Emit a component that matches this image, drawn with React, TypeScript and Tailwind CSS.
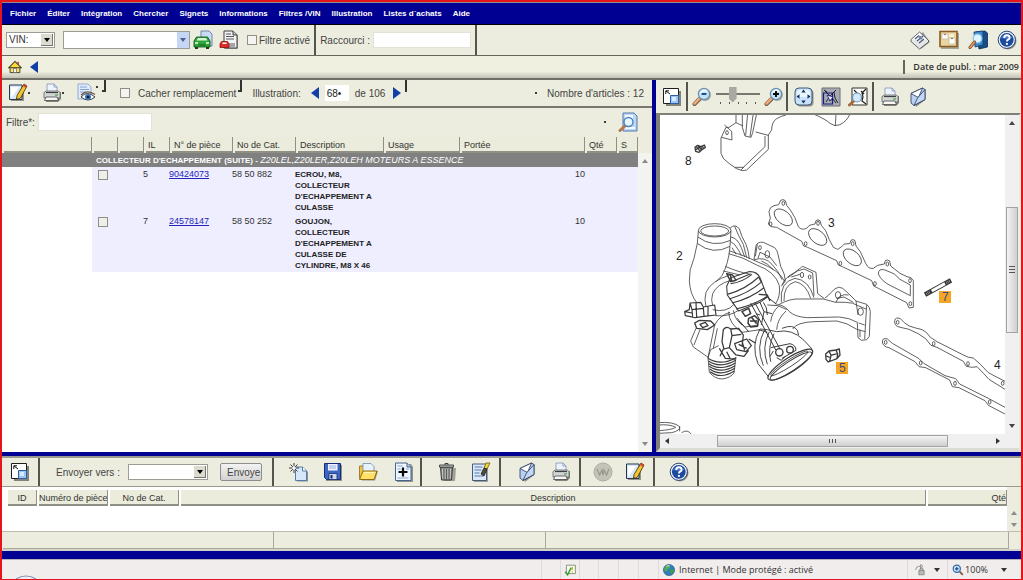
import React from "react";
import clsx from "clsx";

type IconProps = { className?: string };

const MENU = [
  "Fichier",
  "Éditer",
  "Intégration",
  "Chercher",
  "Signets",
  "Informations",
  "Filtres /VIN",
  "Illustration",
  "Listes d´achats",
  "Aide",
];

const PARTS = [
  {
    il: "5",
    partNo: "90424073",
    catNo: "58 50 882",
    description: ["ECROU, M8,", "COLLECTEUR", "D'ECHAPPEMENT A", "CULASSE"],
    qty: 10,
  },
  {
    il: "7",
    partNo: "24578147",
    catNo: "58 50 252",
    description: ["GOUJON,", "COLLECTEUR", "D'ECHAPPEMENT A", "CULASSE DE", "CYLINDRE, M8 X 46"],
    qty: 10,
  },
];

/* ---------- Icons ---------- */

function Svg({ children, className = "size-5" }: { children: React.ReactNode; className?: string }) {
  return (
    <svg viewBox="0 0 20 20" className={clsx("block shrink-0", className)} fill="none" aria-hidden="true">
      {children}
    </svg>
  );
}

function NoteIcon() {
  return (
    <Svg>
      <path d="M3 3h13v15H3z" fill="#5a5a55" opacity=".6" />
      <path d="M1.500 2h12.500v14.500H1.500z" fill="#d8e8fa" stroke="#26364f" />
      <path d="M3 4h8l-7 10H3z" fill="#fff" />
      <path d="M16 1l3 2-6.500 12-4 2 .500-4.500z" fill="#f3c62e" stroke="#4a3a10" strokeWidth=".9" />
      <path d="M16 1l3 2-1 2-3.200-1.900z" fill="#d8452f" />
      <path d="M8.700 15l1.300 1-1.500 1z" fill="#222" />
    </Svg>
  );
}

function PrinterIcon() {
  return (
    <Svg>
      <path d="M4 11l3-2h12v7l-3 3H4z" fill="#55554f" opacity=".7" />
      <path d="M5 9V1h7l3 3v5z" fill="#eef4ff" stroke="#7d93b8" strokeWidth=".8" />
      <path d="M12 1v3h3" stroke="#7d93b8" strokeWidth=".8" />
      <path d="M2 9.500L4.500 8h12L18 9.500V15H2z" fill="#d4d6d6" stroke="#5d6265" strokeWidth=".8" />
      <path d="M4 9.500h12" stroke="#3b3f42" strokeWidth="1.200" />
      <path d="M13 12h3" stroke="#4aa33f" strokeWidth="1.200" />
      <path d="M4 14h11l1.500 3.500h-14z" fill="#f6f6f2" stroke="#45494b" strokeWidth=".8" />
    </Svg>
  );
}

function PageEyeIcon() {
  return (
    <Svg>
      <path d="M2 1h10l3 3v12H2z" fill="#dfeafb" stroke="#7f9cc9" strokeWidth=".8" />
      <path d="M4 4h7M4 6.500h9M4 9h6" stroke="#86a4d2" strokeWidth="1" />
      <path d="M5 14q6-7 14 0-7 6-14 0z" fill="#fff" stroke="#3b3b3b" strokeWidth="1" />
      <path d="M5 12q6-6 14-.5" stroke="#6e5a4c" strokeWidth="1.200" />
      <circle cx="12" cy="14" r="3" fill="#3673b8" />
      <circle cx="12" cy="14" r="1.300" fill="#0c1b33" />
    </Svg>
  );
}

function CarIcon() {
  return (
    <Svg>
      <path d="M8 1h8l3 3v12H8z" fill="#c8dcf5" stroke="#54719d" strokeWidth=".8" />
      <path d="M3.500 7h11L17 11v6H1v-6z" fill="#2fa53a" stroke="#125b1c" strokeWidth=".9" />
      <path d="M5 8h8l1.500 2.500h-11z" fill="#d9f3da" />
      <path d="M2 13h3M13 13h3" stroke="#f0ffe8" strokeWidth="1.500" />
      <path d="M5.500 15h7" stroke="#125b1c" />
      <path d="M2 17h3v2H2zM13 17h3v2h-3z" fill="#1d3a20" />
    </Svg>
  );
}

function PageCarIcon() {
  return (
    <Svg>
      <path d="M6 2h10l3 3v14H6z" fill="#8a8a84" opacity=".7" />
      <path d="M5 1h9l4 4v13H5z" fill="#f3f3f3" stroke="#3f3f3f" />
      <path d="M14 1v4h4" fill="#ccc" stroke="#3f3f3f" />
      <path d="M7 4h5M7 6.500h8M7 9h8M10 14h6M10 16h6" stroke="#55585c" />
      <path d="M2.500 11.500h6L10 14v3.500H1V14z" fill="#df2a2a" stroke="#8d1010" strokeWidth=".8" />
      <path d="M3.500 12.500h4v1.500h-4z" fill="#fff" />
    </Svg>
  );
}

function NewsIcon() {
  return (
    <Svg>
      <path d="M3 11l10-9 7 10-9 7z" fill="#66665f" opacity=".6" />
      <path d="M1 9.500L9.500 2 18 10l-8.500 7z" fill="#fff" stroke="#3b4253" strokeWidth=".8" />
      <path d="M1 9.500v2l8.500 7.500 9-7v-2" fill="#e6e6e6" stroke="#3b4253" strokeWidth=".8" />
      <path d="M5 9l4-3.500M7 11l6-5M9 13l5-4" stroke="#4b5878" strokeWidth="1.200" />
      <path d="M8 7l3 3 2-2-3-2.500z" fill="#7488ad" />
    </Svg>
  );
}

function BoardIcon() {
  return (
    <Svg>
      <path d="M2 3h18v16H2z" fill="#77776d" opacity=".6" />
      <path d="M1 1.500h17v15H1z" fill="#e8d6a3" stroke="#8a5a22" strokeWidth="1.600" />
      <path d="M3 4h6v5H3zM10 8h6v6h-6z" fill="#fff" stroke="#b9b292" strokeWidth=".6" />
      <path d="M10 4h5v3h-5z" fill="#f7f0d2" />
      <circle cx="6" cy="4.500" r=".8" fill="#a44" />
      <circle cx="13" cy="8.500" r=".8" fill="#555" />
    </Svg>
  );
}

function BookSearchIcon() {
  return (
    <Svg>
      <path d="M8 2l9-1 2.500 2v14L11 19z" fill="#174e86" stroke="#0b2d52" strokeWidth=".8" />
      <path d="M6 2l9-1v14l-8 2z" fill="#3c86c9" stroke="#123f6d" strokeWidth=".8" />
      <circle cx="9.500" cy="8.500" r="4.300" fill="#dff4ff" stroke="#8cc7e8" strokeWidth="1.300" />
      <path d="M6.500 12L2 17.500" stroke="#7a4a26" strokeWidth="3" strokeLinecap="round" />
      <path d="M6.500 12L2 17.500" stroke="#e89b63" strokeWidth="1.600" strokeLinecap="round" />
    </Svg>
  );
}

function HelpIcon() {
  return (
    <Svg>
      <circle cx="11" cy="11" r="8.500" fill="#55554f" opacity=".6" />
      <circle cx="9.800" cy="9.800" r="8.600" fill="#e9f0fa" stroke="#1b3263" strokeWidth=".9" />
      <circle cx="9.800" cy="9.800" r="6.900" fill="#1c4a9e" />
      <path d="M4 7.500q5-6 11.500 0-5 3-11.500 0z" fill="#5f8fd8" opacity=".7" />
      <path d="M7.200 8q0-2.700 2.700-2.700t2.700 2.400q0 1.300-1.500 2-1.200.6-1.200 1.900" stroke="#fff" strokeWidth="1.900" />
      <path d="M8.900 13h2v1.800h-2z" fill="#fff" />
    </Svg>
  );
}

function HomeIcon() {
  return (
    <Svg className="size-3.5">
      <path d="M3 10h14v8H3z" fill="#f8e36d" stroke="#3a3a2a" strokeWidth="1.300" />
      <path d="M10 2l9 9H1z" fill="#ffd93b" stroke="#3a3a2a" strokeWidth="1.500" />
      <path d="M13.500 2.500h2v4h-2z" fill="#b33" />
      <path d="M8 12h4v6H8z" fill="#fff" stroke="#555" />
    </Svg>
  );
}

function Arrow({ left, className }: { left?: boolean; className?: string }) {
  return (
    <svg viewBox="0 0 8 12" className={clsx("block h-3 w-2 shrink-0", className)} aria-hidden="true">
      <path d={left ? "M8 0v12L0 6z" : "M0 0v12l8-6z"} fill="#123ea8" />
    </svg>
  );
}

function ExpandIcon() {
  return (
    <Svg>
      <path d="M4 4h15v15H4z" fill="#55554f" opacity=".7" />
      <path d="M1.500 1.500h15v15h-15z" fill="#fff" stroke="#1e1e1e" strokeWidth="1" />
      <path d="M8.500 8.500h8v8h-8z" fill="#9cc6f4" stroke="#2c5fa8" />
      <path d="M10 10h4v4h-4z" fill="#d5e9ff" />
      <path d="M8 7L4 4M3.800 7V3.800H7" stroke="#111" strokeWidth="1" />
    </Svg>
  );
}

function ZoomIcon({ plus }: { plus?: boolean }) {
  return (
    <Svg>
      <path d="M8 11.500L2.500 17" stroke="#6e5a4a" strokeWidth="4" strokeLinecap="round" />
      <path d="M8 11L2.500 16.500" stroke="#eda877" strokeWidth="2.600" strokeLinecap="round" />
      <circle cx="13" cy="8" r="6" fill="#66665f" opacity=".5" />
      <circle cx="12" cy="7" r="5.600" fill="#c3e4f8" stroke="#6c8fb0" strokeWidth="1.200" />
      <path d="M8.500 6q3-4 6.500-1.500" stroke="#fff" strokeWidth="1.300" />
      <path d={plus ? "M9 7h6M12 4v6" : "M9.500 7h5"} stroke={plus ? "#0a0a0a" : "#1a4a8e"} strokeWidth="1.900" />
    </Svg>
  );
}

function FitIcon() {
  return (
    <Svg>
      <rect x="2.500" y="2.500" width="17" height="17" rx="4" fill="#55554f" opacity=".6" />
      <rect x="1" y="1" width="17" height="17" rx="4" fill="#c8e2f9" stroke="#3c5878" />
      <rect x="3" y="3" width="13" height="7" rx="3" fill="#e9f5ff" />
      <path d="M9.500 2.500l2.200 3H7.300zM9.500 16.500l2.200-3H7.300zM2.500 9.500l3-2.200v4.400zM16.500 9.500l-3-2.200v4.400z" fill="#16325e" />
    </Svg>
  );
}

function HotspotIcon() {
  return (
    <Svg>
      <path d="M1 1h18v18H1z" fill="#a9aab0" stroke="#6b6c75" />
      <path d="M2.500 6h9v11h-9z" stroke="#141a86" strokeWidth="1.200" />
      <path d="M4 4l5 5-4 6M9 9l6-6M8 14l4-2 3 4M13 5l1 6 3 5M3 3l3 2" stroke="#15151d" strokeWidth=".9" />
      <path d="M6 8l3 6 3-4z" fill="#e9eaf5" stroke="#141a86" strokeWidth=".8" />
    </Svg>
  );
}

function SearchDrawIcon() {
  return (
    <Svg>
      <path d="M4 1h15v17H4z" fill="#fdfdfb" stroke="#30302d" />
      <path d="M6 3l3 3M18 2l-4 4 1 4-1 4 4 3M13 4l3 3" stroke="#222" strokeWidth="1.200" />
      <path d="M6 14l-4.500 4" stroke="#a8673a" strokeWidth="3" strokeLinecap="round" />
      <circle cx="9" cy="10.500" r="4.500" fill="#d2eafa" stroke="#6b92b5" strokeWidth="1.200" />
    </Svg>
  );
}

function MailIcon() {
  return (
    <Svg>
      <path d="M5 8L17 3v10L8 20z" fill="#55554f" opacity=".6" />
      <path d="M3 6.500L14.500 1 17 2.500v10L6 18.500 3 16z" fill="#b9d0f0" stroke="#26375c" strokeWidth=".8" />
      <path d="M3 6.500L14.500 1l-4 9.500z" fill="#fff" stroke="#26375c" strokeWidth=".8" />
      <path d="M6 18.500L17 12.500v-10L9.500 11z" fill="#c3d8f6" stroke="#26375c" strokeWidth=".8" />
    </Svg>
  );
}

function PageSearchIcon() {
  return (
    <Svg>
      <path d="M5 1h11l3 3v15H5z" fill="#bdd7f6" stroke="#5377ad" />
      <path d="M7 3h8v4H7zM7 15h10v2H7z" fill="#f4f9ff" />
      <path d="M7 14l-5 4.500" stroke="#b87843" strokeWidth="3" strokeLinecap="round" />
      <circle cx="10.500" cy="10" r="4.500" fill="#e6f6ff" stroke="#4b82bd" strokeWidth="1.400" />
    </Svg>
  );
}

function NewDocIcon() {
  return (
    <Svg>
      <path d="M9 7h8l3 3v9.500H9z" fill="#55554f" opacity=".6" />
      <path d="M7.500 5h7l4 4v9.500h-11z" fill="#d4e7fb" stroke="#547aa8" />
      <path d="M14.500 5v4h4" fill="#fff" stroke="#547aa8" />
      <path d="M6 1v10M1 6h10M2.500 2.500l7 7M9.500 2.500l-7 7" stroke="#3d3d3d" strokeWidth="1" />
      <circle cx="6" cy="6" r="1.800" fill="#fff" />
    </Svg>
  );
}

function SaveIcon() {
  return (
    <Svg>
      <path d="M3 3h16v16H3z" fill="#55554f" opacity=".6" />
      <path d="M1.500 1.500h16v16h-14l-2-2z" fill="#3c66c4" stroke="#152c70" />
      <path d="M5 2h9.500v6.500H5z" fill="#eef3ff" />
      <path d="M6 4h7M6 6h7" stroke="#9bb0de" />
      <path d="M6 11.500h8v6H6z" fill="#cdd6ea" stroke="#152c70" strokeWidth=".8" />
      <path d="M7.500 13h2v3.500h-2z" fill="#152c70" />
    </Svg>
  );
}

function FolderIcon() {
  return (
    <Svg>
      <path d="M3 9h17l-3 9.500H4z" fill="#55554f" opacity=".6" />
      <path d="M1.500 4h5l1.500 2v10H1.500z" fill="#f0c53c" stroke="#8d6a12" strokeWidth=".8" />
      <path d="M5 1.500h8l3 3V13H5z" fill="#e9f2ff" stroke="#6e8bb5" strokeWidth=".8" />
      <path d="M5 9h14l-3 8.500H1.500z" fill="#ffe16a" stroke="#8d6a12" />
      <path d="M6 10.500h10" stroke="#fff6c0" />
    </Svg>
  );
}

function PagePlusIcon() {
  return (
    <Svg>
      <path d="M4 2h14l2 3v15H4z" fill="#55554f" opacity=".6" />
      <path d="M2.500 1H14l4 4v13.500H2.500z" fill="#eef5ff" stroke="#44638f" />
      <path d="M14 1v4h4" fill="#b9d0ef" stroke="#44638f" />
      <path d="M4.500 4h5M4.500 16h11M4.500 7h3M13 7h3" stroke="#88a5cf" />
      <path d="M10 5.500v9M5.500 10h9" stroke="#0a0a0a" strokeWidth="2.200" />
    </Svg>
  );
}

function TrashIcon() {
  return (
    <Svg>
      <path d="M6 6h13l-1 13H7z" fill="#55554f" opacity=".5" />
      <path d="M3.500 5h12l-1 13h-10z" fill="#8d8f8c" stroke="#3c3d3b" />
      <path d="M5.500 7l.5 10M8 7v10M11 7v10M13.500 7l-.5 10" stroke="#cfd1cd" />
      <path d="M7 7v10M9.500 7v10M12 7v10" stroke="#4c4d4b" strokeWidth=".8" />
      <path d="M2.500 3h14v2.200h-14z" fill="#b8bab6" stroke="#3c3d3b" strokeWidth=".9" />
      <path d="M8 3V1.500h3V3" stroke="#3c3d3b" />
    </Svg>
  );
}

function PageBrushIcon() {
  return (
    <Svg>
      <path d="M3 3h14v17H3z" fill="#55554f" opacity=".5" />
      <path d="M1.500 2h14v16.500h-14z" fill="#dbe8fa" stroke="#47597a" />
      <path d="M3.500 5h8M3.500 8h7M3.500 11h5M3.500 14h9" stroke="#5b79ab" strokeWidth="1.200" />
      <path d="M15 1h4l-3 6-3-1z" fill="#f3d431" stroke="#6b5a10" strokeWidth=".8" />
      <path d="M13 6l3 1-3 7-3-2z" fill="#4b4b3a" stroke="#222" strokeWidth=".8" />
    </Svg>
  );
}

function DiscIcon() {
  return (
    <Svg>
      <circle cx="10" cy="10" r="9" fill="#c4c3b8" stroke="#aeada2" />
      <path d="M4 7l2.500 6L9 8l1 5 1-5 2.500 5L16 7" stroke="#9b9a90" strokeWidth="1.300" />
    </Svg>
  );
}

function GlobeIcon() {
  return (
    <Svg className="size-3">
      <circle cx="10" cy="10" r="9.300" fill="#2f7fc0" stroke="#1c4c74" />
      <path d="M4 4q4-3 8-1l-1 4-4 2-1 4-4-3q0-4 2-6z" fill="#55b052" />
      <path d="M12 9l6 0q1 5-4 8l-3-4z" fill="#3f9d4b" />
      <path d="M6 4q3-2 5-1" stroke="#e6f7ff" strokeWidth="1.500" />
    </Svg>
  );
}

function IconButton({ label, children }: { label: string; children: React.ReactNode }) {
  return (
    <button type="button" aria-label={label} className="shrink-0">
      {children}
    </button>
  );
}

/* ---------- Small controls ---------- */

function Dot({ className }: IconProps) {
  return <span className={clsx("size-0.5 shrink-0 rounded-full bg-black", className)} />;
}

function Separator({ className }: IconProps) {
  return <span className={clsx("w-0.5 shrink-0 self-stretch bg-[#55554f]", className)} />;
}

function Caret({ up, className }: { up?: boolean; className?: string }) {
  return (
    <svg viewBox="0 0 6 4" className={clsx("block h-1 w-1.5 shrink-0", className)} aria-hidden="true">
      <path d={up ? "M0 4h6L3 0z" : "M0 0h6L3 4z"} fill="currentColor" />
    </svg>
  );
}

function DropDown({ label, options, className }: { label: string; options: string[]; className?: string }) {
  return (
    <div className={clsx("relative h-4 shrink-0", className)}>
      <select
        aria-label={label}
        className="block h-full w-full appearance-none border border-[#9c9c94] bg-white pl-0.5 text-[10px] leading-3 text-[#333]"
      >
        {options.map((option) => (
          <option key={option}>{option}</option>
        ))}
      </select>
      <span className="pointer-events-none absolute inset-y-0.5 right-0.5 flex w-3 items-center justify-center border-r border-b border-[#77776f] bg-[#dcdbd0] text-black">
        <Caret />
      </span>
    </div>
  );
}

function HeadCell({ children, align = "pl-0.5 text-left" }: { children?: React.ReactNode; align?: string }) {
  return (
    <th className="p-0 pl-0.5 font-normal">
      <div
        className={clsx(
          "h-4 overflow-hidden border-r border-b-2 border-[#8f8f85] bg-[#ebecdb] text-[9px] leading-4 whitespace-nowrap text-[#333]",
          align,
        )}
      >
        {children}
      </div>
    </th>
  );
}

/* ---------- Header ---------- */

function MenuBar() {
  return (
    <nav className="flex h-[22px] items-center gap-[11px] border-b border-black bg-[#000092] pl-2">
      {MENU.map((item) => (
        <button key={item} type="button" className="text-[8px] leading-3 font-bold whitespace-nowrap text-white">
          {item}
        </button>
      ))}
    </nav>
  );
}

function VinBar() {
  return (
    <div className="flex h-[31px] items-center border-b border-[#66665f] pr-1">
      <DropDown label="Type de recherche" options={["VIN:"]} className="ml-1 w-[49px]" />
      <div className="ml-2 flex h-[18px] w-[127px] shrink-0 border border-[#9c9c94] bg-white">
        <input type="text" aria-label="VIN" className="min-w-0 flex-1 px-1 text-[10px]" />
        <button
          type="button"
          aria-label="Historique VIN"
          className="flex w-3 items-center justify-center bg-[#c6d6f5] text-[#4a6490]"
        >
          <Caret />
        </button>
      </div>
      <div className="ml-[3px] flex gap-1.5">
        <IconButton label="Véhicule">
          <CarIcon />
        </IconButton>
        <IconButton label="Effacer le véhicule">
          <PageCarIcon />
        </IconButton>
      </div>
      <label className="ml-2 flex shrink-0 items-center gap-0.5 text-[10px] text-[#444]">
        <input type="checkbox" className="size-2.5 appearance-none border border-[#8f8f88] bg-[#f4f4f0]" />
        Filtre activé
      </label>
      <Separator className="ml-1" />
      <label className="mx-1 flex shrink-0 items-center gap-[3px] text-[10px] text-[#444]">
        Raccourci :
        <input type="text" className="h-4 w-[98px] border border-[#e2e2d8] bg-white px-1" />
      </label>
      <Separator />
      <div className="ml-auto flex gap-[9px]">
        <IconButton label="Actualités">
          <NewsIcon />
        </IconButton>
        <IconButton label="Tableau">
          <BoardIcon />
        </IconButton>
        <IconButton label="Recherche catalogue">
          <BookSearchIcon />
        </IconButton>
        <IconButton label="Aide">
          <HelpIcon />
        </IconButton>
      </div>
    </div>
  );
}

function HomeBar() {
  return (
    <div className="flex h-6 items-center gap-2 border-b-2 border-[#6f6f68] bg-linear-to-b from-[#f0f0e0] from-70% to-[#c2c2b6] pl-1.5">
      <IconButton label="Accueil">
        <HomeIcon />
      </IconButton>
      <IconButton label="Retour">
        <Arrow left />
      </IconButton>
      <div className="my-1 ml-auto flex items-center self-stretch border-l-2 border-[#66665f] pr-0.5 pl-2 font-['Open_Sans',sans-serif] text-[9px] font-semibold text-[#333]">
        Date de publ. : mar 2009
      </div>
    </div>
  );
}

/* ---------- Parts list ---------- */

function PartsToolbar() {
  return (
    <div className="flex h-7 items-center border-b-2 border-[#77776f] pr-2 pl-1.5 text-[10px] text-[#444]">
      <IconButton label="Notes">
        <NoteIcon />
      </IconButton>
      <Dot />
      <span className="w-3" />
      <IconButton label="Imprimer">
        <PrinterIcon />
      </IconButton>
      <Dot />
      <span className="w-3" />
      <IconButton label="Aperçu">
        <PageEyeIcon />
      </IconButton>
      <Dot className="mb-3" />
      <span className="ml-1 h-3 w-1 self-start border-r-2 border-b-2 border-[#33332f]" />
      <label className="ml-3.5 flex items-center gap-2">
        <input type="checkbox" className="size-2.5 appearance-none border border-[#8f8f88] bg-[#f4f4f0]" />
        Cacher remplacement
      </label>
      <span className="ml-0.5 h-3 w-1 self-start border-r-2 border-b-2 border-[#33332f]" />
      <label htmlFor="illustration" className="ml-2.5">
        Illustration:
      </label>
      <IconButton label="Illustration précédente">
        <Arrow left className="mr-1.5 ml-2.5" />
      </IconButton>
      <input id="illustration" type="text" defaultValue="68•" className="h-4 w-6 bg-white px-0.5 text-[#222]" />
      <span className="ml-1.5">de 106</span>
      <IconButton label="Illustration suivante">
        <Arrow className="ml-2" />
      </IconButton>
      <span className="ml-1 h-3 w-0.5 self-start bg-[#33332f]" />
      <Dot className="ml-auto" />
      <span className="ml-2.5">Nombre d'articles : 12</span>
    </div>
  );
}

function FilterRow() {
  return (
    <div className="flex h-7 items-center pr-3.5 pl-1">
      <label className="flex items-center gap-[3px] text-[10px] text-[#444]">
        Filtre*:
        <input type="text" className="h-[18px] w-[114px] border border-[#e2e2d8] bg-white px-1" />
      </label>
      <Dot className="mr-3 ml-auto" />
      <IconButton label="Rechercher">
        <PageSearchIcon />
      </IconButton>
    </div>
  );
}

function PartsHead() {
  return (
    <div className="pt-px pr-3.5">
      <table className="w-full table-fixed border-collapse">
        <colgroup>
          <col className="w-[90px]" />
          <col className="w-[26px]" />
          <col className="w-[26px]" />
          <col className="w-[26px]" />
          <col className="w-[63px]" />
          <col className="w-[63px]" />
          <col className="w-[88px]" />
          <col className="w-[76px]" />
          <col />
          <col className="w-[32px]" />
          <col className="w-[21px]" />
        </colgroup>
        <thead>
          <tr>
            <HeadCell />
            <HeadCell />
            <HeadCell />
            <HeadCell>IL</HeadCell>
            <HeadCell>N° de pièce</HeadCell>
            <HeadCell>No de Cat.</HeadCell>
            <HeadCell>Description</HeadCell>
            <HeadCell>Usage</HeadCell>
            <HeadCell>Portée</HeadCell>
            <HeadCell>Qté</HeadCell>
            <HeadCell>S</HeadCell>
          </tr>
        </thead>
      </table>
    </div>
  );
}

function PartsBody() {
  return (
    <div className="flex flex-1">
      <div className="min-w-0 flex-1 bg-white">
        <table className="w-full table-fixed border-collapse text-[9px] leading-[11px] text-[#333]">
          <colgroup>
            <col className="w-[90px]" />
            <col className="w-[51px]" />
            <col className="w-[26px]" />
            <col className="w-[63px]" />
            <col className="w-[63px]" />
            <col className="w-[88px]" />
            <col />
            <col className="w-[24px]" />
            <col className="w-[53px]" />
          </colgroup>
          <tbody>
            <tr className="h-3.5 bg-[#808080] text-white">
              <td className="p-0" />
              <th colSpan={8} className="p-0 pl-1 text-left text-[8px] whitespace-nowrap">
                COLLECTEUR D'ECHAPPEMENT (SUITE) -{" "}
                <em className="text-[9px] font-normal">Z20LEL,Z20LER,Z20LEH MOTEURS A ESSENCE</em>
              </th>
            </tr>
            {PARTS.map((part) => (
              <tr key={part.partNo} className="align-top">
                <td className="p-0" />
                <td className="bg-[#eeeeff] p-0 pt-[3px] pl-1.5">
                  <input
                    type="checkbox"
                    aria-label={`Sélectionner ${part.partNo}`}
                    className="block size-2.5 appearance-none border border-[#8f8f88] bg-[#efefea]"
                  />
                </td>
                <td className="bg-[#eeeeff] p-0 pt-0.5">{part.il}</td>
                <td className="bg-[#eeeeff] p-0 pt-0.5">
                  <a href={`#${part.partNo}`} className="text-[#2424b8] underline">
                    {part.partNo}
                  </a>
                </td>
                <td className="bg-[#eeeeff] p-0 pt-0.5">{part.catNo}</td>
                <td className="bg-[#eeeeff] p-0 pt-0.5 pb-px text-[8px] font-bold whitespace-nowrap text-[#222]">
                  {part.description.map((line) => (
                    <div key={line}>{line}</div>
                  ))}
                </td>
                <td className="bg-[#eeeeff] p-0" />
                <td className="bg-[#eeeeff] p-0 pt-0.5 text-right">{part.qty}</td>
                <td className="bg-[#eeeeff] p-0" />
              </tr>
            ))}
          </tbody>
        </table>
      </div>
      <div className="flex w-3.5 flex-col items-center justify-between bg-[#f3f3ef] py-1.5 text-[#8a8a8a]">
        <Caret up />
        <Caret />
      </div>
    </div>
  );
}

/* ---------- Illustration ---------- */

function PartsDrawing() {
  return (
    <svg
      viewBox="660 115 345 319"
      preserveAspectRatio="xMinYMin slice"
      className="block h-0 min-h-0 w-full flex-1"
      role="img"
      aria-label="Collecteur d'échappement"
      fill="none"
      stroke="#3a3a3a"
      strokeWidth="2.400"
      strokeLinejoin="round"
    >
      {/* heat shield, bolt and port gasket */}
      <g transform="translate(655 110) scale(.33333)">
        <path d="M243 10V38L222 52 213 52 198 84V130Q202 148 222 160 245 180 262 182L275 180 340 118V75L350 60Q350 36 365 26 378 18 393 15" />
        <path d="M240 172L265 172 330 110V78M262 10V52L270 78 288 82 293 68 304 15M278 10L272 76M295 10L285 80M302 66L340 76M208 45L230 64 231 90 200 82M243 38L264 48M258 180L268 170" />
        <ellipse cx="216" cy="68" rx="4" ry="6" />
        <path d="M480 14Q512 28 525 40L540 47 555 44Q576 33 584 14M541 47L543 14" />
        <path
          d="M120 112L128 106 138 110 140 120 132 127 122 124ZM138 110L148 105 151 112 141 119M124 110L136 124M130 108L138 118M142 108L146 116M122 120L134 110"
          strokeWidth="4"
        />
        <path d="M340 342L346 325 342 305Q344 290 357 287L371 284 377 271Q384 266 391 272L395 286 406 300Q421 320 430 350 440 362 455 355L463 346 480 342 483 332Q489 327 495 332L499 346 512 362Q522 390 535 412L548 418 560 410 568 402 584 401 588 391Q594 386 600 392L603 408 616 425 632 460Q640 478 655 475L668 466 688 462 691 452Q698 447 704 453L707 468 735 490 756 500Q770 500 775 512V592L762 594 755 578 670 535 656 528 650 512 562 470 550 465 545 452 458 412 446 408 440 394 365 352 348 350Z" />
        <ellipse cx="385" cy="322" rx="32" ry="19" transform="rotate(40 385 322)" />
        <ellipse cx="488" cy="381" rx="32" ry="19" transform="rotate(40 488 381)" />
        <ellipse cx="592" cy="442" rx="32" ry="19" transform="rotate(40 592 442)" />
        <path d="M670 492Q670 474 690 480L718 492 735 508 766 525V557L705 526Q680 514 670 492Z" />
        {[
          [385, 280],
          [347, 342],
          [489, 340],
          [452, 401],
          [593, 401],
          [556, 460],
          [697, 462],
          [660, 521],
          [765, 512],
          [766, 581],
        ].map(([cx, cy]) => (
          <ellipse key={`${cx}-${cy}`} cx={cx} cy={cy} rx="4" ry="6" />
        ))}
      </g>

      {/* stud, nut and lower gaskets */}
      <g transform="translate(655 270) scale(.33333)">
        <path d="M810 74L888 31" stroke="#333" strokeWidth="14" />
        <path d="M830 63L870 41" stroke="#fff" strokeWidth="9" />
        <path d="M814 72L826 65M874 39L886 32" stroke="#aaa" strokeWidth="8" strokeDasharray="2 3" />
        <path
          d="M512 252L522 243 543 240 553 237 555 255 546 266 520 276 513 268ZM522 243L528 256 524 274M543 240L548 252 546 266M528 256L548 250M514 258L524 262"
          strokeWidth="4"
        />
        <path d="M719 152Q721 140 736 146L748 158Q760 170 782 174L802 179Q816 186 826 202L846 215 925 255Q940 264 955 264 975 280 1000 308L1050 334M719 152Q718 168 732 171L762 178Q792 190 812 206L828 226 846 232 925 274 934 289 952 292 966 290Q986 310 1002 328L1050 358" />
        <path d="M682 216Q682 202 697 207L712 220 792 266 806 280 870 317 902 326 914 342 1000 385 1050 412M682 216Q684 230 702 233L780 275 792 290 812 293 884 330 892 350 912 353 990 392 1000 406 1050 432" />
        {[
          [728, 157],
          [836, 221],
          [939, 281],
          [1043, 340],
          [692, 217],
          [797, 279],
          [900, 340],
          [1004, 396],
        ].map(([cx, cy]) => (
          <ellipse key={`${cx}-${cy}`} cx={cx} cy={cy} rx="4" ry="6" />
        ))}
        <path d="M10 458Q55 454 74 470 76 482 50 488L10 490M10 465Q45 462 62 472 50 480 10 482M74 470L74 484M80 488Q98 476 110 494" />
      </g>

      {/* manifold with turbocharger */}
      <g transform="translate(680 215) scale(.33333)">
        <ellipse cx="104" cy="46" rx="49" ry="20" />
        <ellipse cx="104" cy="48" rx="42" ry="15" />
        <path d="M55 48L52 85Q98 122 150 94L153 48M54 66Q98 100 152 76" />
        <path d="M52 85L42 130Q26 165 28 198 31 240 50 262M150 95Q146 145 126 182L108 200" />
        <path d="M150 40Q165 24 178 42 184 64 198 88 206 108 208 132M164 34Q174 60 190 88L200 128M152 66Q172 68 184 98L194 126M152 80Q164 84 176 106L184 122M156 98L168 118" />
        <path d="M146 116Q190 126 230 150 286 170 298 212 302 244 286 268M136 154Q176 172 206 176M150 108Q200 124 236 142 300 166 314 200" />
        <path d="M222 134L228 92Q232 80 250 82L284 98Q292 106 294 118L302 154Q316 178 316 198L304 214M222 134Q256 124 276 148 296 168 306 194M234 130L240 112 270 126 290 152M232 88L226 124M244 138Q262 144 280 164" />
        <ellipse cx="240" cy="98" rx="4" ry="6" />
        <ellipse cx="262" cy="118" rx="7" ry="11" />
        <path d="M306 210Q316 186 342 174L368 154 408 172 413 236 432 250M324 188L352 168 372 162 398 174 402 242M304 262Q298 200 345 190 386 194 402 248M312 258Q310 210 346 200 378 206 392 250M334 186L360 178" />
        <ellipse cx="366" cy="180" rx="5" ry="8" />
        <ellipse cx="389" cy="186" rx="4" ry="6" />
        <path d="M298 268Q330 250 360 252L430 252Q466 266 496 262 520 262 534 272L558 282M292 268Q316 272 328 290 346 306 382 308L478 306Q508 308 532 322M338 342Q350 322 402 320L470 318Q500 322 532 344M262 270L294 272 320 284M272 320Q276 290 296 274M290 344Q292 312 318 288" />
        <path d="M434 250L446 240 464 222Q476 212 488 220L506 236 528 258 560 268Q570 276 571 290L568 364 560 374 545 376 534 368 532 322M468 262Q478 234 506 240M470 250L492 246 520 262M560 270L554 372M534 344L556 350M536 324L554 330M540 344V366M528 258L534 300" />
        <ellipse cx="474" cy="240" rx="8" ry="10" />
        <ellipse cx="542" cy="290" rx="8" ry="11" />

        {/* actuator */}
        <path d="M140 214L152 188 206 170Q230 168 240 188L262 246 240 262 176 288 162 268 142 240Z" strokeWidth="3.200" />
        <path d="M142 238Q196 224 236 186M148 252Q204 236 246 200M156 264Q212 250 252 218M168 282Q222 270 262 244M152 206Q186 202 216 178M160 198L212 176M236 186L244 202" strokeWidth="3.400" />
        <path d="M140 176L158 180 168 196 152 200ZM150 176L156 200M236 238L262 240 270 258" strokeWidth="4" />
        <path d="M150 180Q92 198 78 232 72 252 78 276M152 196Q110 208 98 236 92 254 98 272M98 284Q140 294 162 268M106 302Q146 306 176 286M130 168L180 180" />
        <path d="M212 264L288 406M224 262L300 402" strokeWidth="3" />

        {/* connector and housings */}
        <path d="M14 290L28 284 30 264 62 262 70 276 104 270 108 300 72 304 46 308 16 302ZM30 264L36 284 70 280M36 284L38 306M48 264L50 306M70 276L72 304M84 272V302M14 290L36 294" strokeWidth="3.600" />
        <path d="M44 324L58 316 92 318 104 330 82 344 50 340ZM60 328L76 322 84 332 68 338Z" strokeWidth="4" />
        <path d="M48 340L32 378 40 396 86 428M60 344L42 390M104 330L84 428M104 330Q120 300 150 292M112 340L100 400M84 428L92 404 116 392M146 290Q146 326 186 352L240 344M160 286Q164 318 196 336L236 330" />
        <path d="M186 290L206 280 212 296 196 304ZM206 310L224 302 236 314 232 334 212 336 204 324ZM210 318H232M214 306L230 326" strokeWidth="4.500" />
        <path d="M130 344Q138 332 152 342L156 362 148 398 132 402 126 380ZM152 342L176 340 190 360 186 396M156 362L184 358M164 386L200 372 214 392 198 410 170 404ZM176 388L200 400M186 378L194 406M148 398L168 420 192 424 206 406M118 400L136 430 166 432M140 410L150 430M206 372L226 384M130 402L120 424" strokeWidth="3.800" />
        <path d="M180 320L206 350M240 262L252 290 244 330M252 290L276 296M228 296L240 300M262 246L290 268M250 262Q262 276 262 300M236 344L262 352M172 310L186 330" strokeWidth="3" />

        {/* threaded outlet */}
        {[430, 438, 446, 454, 462, 470].map((y) => (
          <path key={y} d={`M${84 + (y - 430) / 6} ${y}Q122 ${y + 24} ${168 - (y - 430) / 8} ${y - 2}`} strokeWidth="3.600" />
        ))}
        <path d="M84 428L88 472Q104 492 128 492 152 488 162 474L168 426" />

        {/* turbine outlet */}
        <path d="M240 342Q212 392 234 446L266 486M254 344Q226 396 250 452M268 350Q244 396 262 448M282 356Q262 396 272 440M240 342L262 344 290 350Q336 340 372 376L396 402M306 340Q340 326 352 346L356 360" strokeWidth="2.800" />
        <ellipse cx="331" cy="449" rx="79" ry="21" transform="rotate(-33 331 449)" strokeWidth="3.600" />
        <ellipse cx="333" cy="453" rx="74" ry="15" transform="rotate(-33 333 453)" strokeWidth="3" />
        <ellipse cx="328" cy="445" rx="66" ry="10" transform="rotate(-33 328 445)" />
        <path d="M272 398L330 386Q348 390 348 406L306 430M280 408L270 424M290 428L304 436 316 424" strokeWidth="3" />
        <circle cx="298" cy="412" r="11" strokeWidth="4" />
        <circle cx="330" cy="404" r="10" strokeWidth="4" />
      </g>

      {/* callouts */}
      <g stroke="none">
        <rect x="939" y="291" width="12" height="12" fill="#f5a623" />
        <rect x="836" y="362" width="12" height="12" fill="#f5a623" />
        <g className="font-['Liberation_Sans',sans-serif] text-[12px]" fill="#222">
          <text x="685" y="165">8</text>
          <text x="828" y="227">3</text>
          <text x="676" y="260">2</text>
          <text x="994" y="369">4</text>
          <text x="942" y="301" fill="#3a4a8c">7</text>
          <text x="839" y="372" fill="#3a4a8c">5</text>
        </g>
      </g>
    </svg>
  );
}

function IllustrationPanel() {
  return (
    <section className="flex w-[369px] shrink-0 flex-col border-l-4 border-[#000092]">
      <div className="flex h-[33px] items-center py-0.5 pl-1.5">
        <IconButton label="Agrandir">
          <ExpandIcon />
        </IconButton>
        <Separator className="mx-1" />
        <IconButton label="Zoom arrière">
          <ZoomIcon />
        </IconButton>
        <div className="mx-1 flex w-11 shrink-0 flex-col">
          <input
            type="range"
            aria-label="Zoom"
            defaultValue={35}
            className="h-4 w-full appearance-none bg-transparent [&::-webkit-slider-runnable-track]:h-0.5 [&::-webkit-slider-runnable-track]:bg-[#77776f] [&::-webkit-slider-thumb]:-mt-1.5 [&::-webkit-slider-thumb]:h-4 [&::-webkit-slider-thumb]:w-2 [&::-webkit-slider-thumb]:appearance-none [&::-webkit-slider-thumb]:bg-[#a9a9a3] [&::-webkit-slider-thumb]:[clip-path:polygon(0_0,100%_0,100%_75%,50%_100%,0_75%)]"
          />
          <div className="flex justify-between px-1 pb-1">
            {[0, 1, 2, 3, 4].map((tick) => (
              <span key={tick} className="h-0.5 w-px bg-[#55554f]" />
            ))}
          </div>
        </div>
        <IconButton label="Zoom avant">
          <ZoomIcon plus />
        </IconButton>
        <Separator className="mr-1.5 ml-0.5" />
        <div className="flex gap-[7px]">
          <IconButton label="Ajuster">
            <FitIcon />
          </IconButton>
          <IconButton label="Zones actives">
            <HotspotIcon />
          </IconButton>
          <IconButton label="Rechercher dans l'illustration">
            <SearchDrawIcon />
          </IconButton>
        </div>
        <Separator className="mr-1.5 ml-1" />
        <div className="flex gap-2">
          <IconButton label="Imprimer">
            <PrinterIcon />
          </IconButton>
          <IconButton label="Envoyer">
            <MailIcon />
          </IconButton>
        </div>
      </div>
      <div className="flex flex-1 border-t-2 border-r-2 border-b-4 border-l-4 border-t-[#808078] border-r-[#ecedde] border-b-[#dcdcd4] border-l-[#808078]">
        <div className="flex min-w-0 flex-1 flex-col bg-white">
          <PartsDrawing />
          <div className="flex h-3.5 items-center justify-between bg-[#f0f0f0] px-1 text-[#333]">
            <Caret className="rotate-90" />
            <div className="flex h-3 w-[231px] items-center justify-center gap-0.5 border border-[#a3a3a3] bg-linear-to-b from-[#f4f4f4] to-[#cfcfd1]">
              <span className="h-1 w-px bg-[#555]" />
              <span className="h-1 w-px bg-[#555]" />
              <span className="h-1 w-px bg-[#555]" />
            </div>
            <Caret className="-rotate-90" />
          </div>
        </div>
        <div className="flex w-3.5 flex-col items-center bg-[#f0f0f0] pt-1.5 pb-5 text-[#444]">
          <Caret up />
          <span className="flex-[82]" />
          <div className="flex h-[126px] w-3 flex-col items-center justify-center gap-0.5 border border-[#a3a3a3] bg-linear-to-r from-[#f4f4f4] to-[#cfcfd1]">
            <span className="h-px w-1.5 bg-[#555]" />
            <span className="h-px w-1.5 bg-[#555]" />
            <span className="h-px w-1.5 bg-[#555]" />
          </div>
          <span className="flex-[92]" />
          <Caret />
        </div>
      </div>
    </section>
  );
}

/* ---------- Shopping list ---------- */

function ListToolbar() {
  return (
    <div className="flex h-[31px] items-center border-t-2 border-b border-[#99998f] pl-2 text-[10px] text-[#444]">
      <IconButton label="Agrandir la liste">
        <ExpandIcon />
      </IconButton>
      <Separator className="mr-4 ml-2" />
      <span className="w-[72px] shrink-0">Envoyer vers :</span>
      <DropDown label="Envoyer vers" options={[""]} className="w-20" />
      <button
        type="button"
        className="mr-2.5 ml-3 h-[18px] w-[42px] shrink-0 overflow-hidden rounded-xs border border-[#8d8d8d] bg-linear-to-b from-[#f3f3f3] to-[#d2d2d2] pl-1.5 text-left"
      >
        Envoye
      </button>
      <Separator />
      <div className="mr-[7px] ml-3.5 flex gap-[15px]">
        <IconButton label="Nouvelle liste">
          <NewDocIcon />
        </IconButton>
        <IconButton label="Enregistrer">
          <SaveIcon />
        </IconButton>
        <IconButton label="Ouvrir">
          <FolderIcon />
        </IconButton>
        <IconButton label="Ajouter">
          <PagePlusIcon />
        </IconButton>
      </div>
      <Separator />
      <div className="ml-[15px] flex gap-3.5">
        <IconButton label="Supprimer">
          <TrashIcon />
        </IconButton>
        <IconButton label="Modifier">
          <PageBrushIcon />
        </IconButton>
      </div>
      <Separator className="mx-2" />
      <div className="mx-2 flex gap-3.5">
        <IconButton label="Envoyer la liste">
          <MailIcon />
        </IconButton>
        <IconButton label="Imprimer la liste">
          <PrinterIcon />
        </IconButton>
      </div>
      <Separator className="mr-3" />
      <div className="flex gap-3">
        <IconButton label="Garantie">
          <DiscIcon />
        </IconButton>
        <IconButton label="Annoter">
          <NoteIcon />
        </IconButton>
      </div>
      <Separator className="mr-3.5 ml-2" />
      <IconButton label="Aide sur la liste">
        <HelpIcon />
      </IconButton>
      <Separator className="ml-2" />
    </div>
  );
}

function ShoppingList() {
  return (
    <section className="border-t-4 border-[#000092]">
      <ListToolbar />
      <div className="flex">
        <div className="min-w-0 flex-1 bg-white pt-[3px] pl-1">
          <table className="w-full table-fixed border-collapse">
            <colgroup>
              <col className="w-[31px]" />
              <col className="w-[71px]" />
              <col className="w-[71px]" />
              <col />
              <col className="w-[81px]" />
            </colgroup>
            <thead>
              <tr>
                <HeadCell align="text-center">ID</HeadCell>
                <HeadCell align="text-center">Numéro de pièce</HeadCell>
                <HeadCell align="text-center">No de Cat.</HeadCell>
                <HeadCell align="text-center">Description</HeadCell>
                <HeadCell align="text-right">Qté</HeadCell>
              </tr>
            </thead>
            <tbody>
              <tr className="h-[25px]">
                <td colSpan={5} />
              </tr>
            </tbody>
          </table>
        </div>
        <div className="flex w-3.5 flex-col items-center justify-end gap-2 pb-1 text-[#8a8a8a]">
          <Caret up />
          <Caret />
        </div>
      </div>
      <div className="flex h-5 border-t border-b-2 border-[#bcbcb0] border-b-[#d2d2c6] pr-3 pl-px">
        <span className="w-[271px] border-r border-b border-[#a9a99e]" />
        <span className="w-[272px] border-r border-b border-[#a9a99e]" />
        <span className="flex-1 border-r border-b border-[#a9a99e]" />
      </div>
      <div className="h-2 bg-[#000092]" />
    </section>
  );
}

function StatusBar() {
  return (
    <footer className="flex h-5 items-center border-t border-[#b5b0b8] bg-[#f1eded] font-['Open_Sans',sans-serif] text-[9px] text-[#333]">
      <svg viewBox="0 0 24 4" className="ml-3 h-1 w-6 self-end" fill="none" aria-hidden="true">
        <path d="M2 4Q12-2 22 4" stroke="#7d8fb8" strokeWidth="1.200" />
      </svg>
      <div className="ml-auto flex items-center self-stretch">
        <span className="w-5 self-stretch border-x border-[#e0dbdb]" />
        <Svg className="mx-[3px] size-3">
          <path d="M4 2h15v14H4z" fill="#f7fbee" stroke="#7c8c72" strokeWidth="1.500" />
          <path d="M14 5v5M14 12v2" stroke="#d8b12b" strokeWidth="2" />
          <path d="M2 13l4 5 6-12" stroke="#3c9c3a" strokeWidth="2.500" />
        </Svg>
        <span className="w-5 self-stretch border-x border-[#e0dbdb]" />
        <span className="w-5 self-stretch border-r border-[#e0dbdb]" />
        <span className="w-5 self-stretch border-r border-[#e0dbdb]" />
        <span className="mr-1 w-5 self-stretch border-r border-[#e0dbdb]" />
        <GlobeIcon />
        <span className="w-[232px] pl-1 whitespace-nowrap">Internet | Mode protégé : activé</span>
      </div>
      <button
        type="button"
        aria-label="Sécurité"
        className="flex w-10 items-center gap-2 self-stretch border-l border-[#e0dbdb] pl-1.5"
      >
        <Svg className="size-3">
          <path d="M3 10q0-7 8-6M11 1v6l4-3z" stroke="#8a8a8a" strokeWidth="1.500" />
          <path d="M8 11h9v7H8z" fill="#b9b9b9" stroke="#6e6e6e" />
          <path d="M10 11V8h5v3" stroke="#6e6e6e" strokeWidth="1.500" />
        </Svg>
        <Caret />
      </button>
      <button
        type="button"
        className="flex items-center gap-px self-stretch border-l border-[#e0dbdb] pr-3.5 pl-1 whitespace-nowrap"
      >
        <Svg className="size-3">
          <path d="M12 12l6 6" stroke="#7f5b3a" strokeWidth="3" />
          <circle cx="8" cy="8" r="6" fill="#cfe6fb" stroke="#2f67a8" strokeWidth="2" />
          <path d="M5 8h6M8 5v6" stroke="#1a4a8e" strokeWidth="2" />
        </Svg>
        100%
        <Caret className="ml-3" />
      </button>
    </footer>
  );
}

export default function App() {
  return (
    <div className="flex min-h-screen flex-col border-2 border-[#e8141c] bg-[#ecedde] font-['Liberation_Sans',Arial,sans-serif]">
      <header className="border-t border-[#8c8c8c]">
        <MenuBar />
        <VinBar />
        <HomeBar />
      </header>
      <main className="flex min-h-80 flex-1">
        <section className="flex min-w-0 flex-1 flex-col">
          <PartsToolbar />
          <FilterRow />
          <PartsHead />
          <PartsBody />
        </section>
        <IllustrationPanel />
      </main>
      <ShoppingList />
      <StatusBar />
    </div>
  );
}
